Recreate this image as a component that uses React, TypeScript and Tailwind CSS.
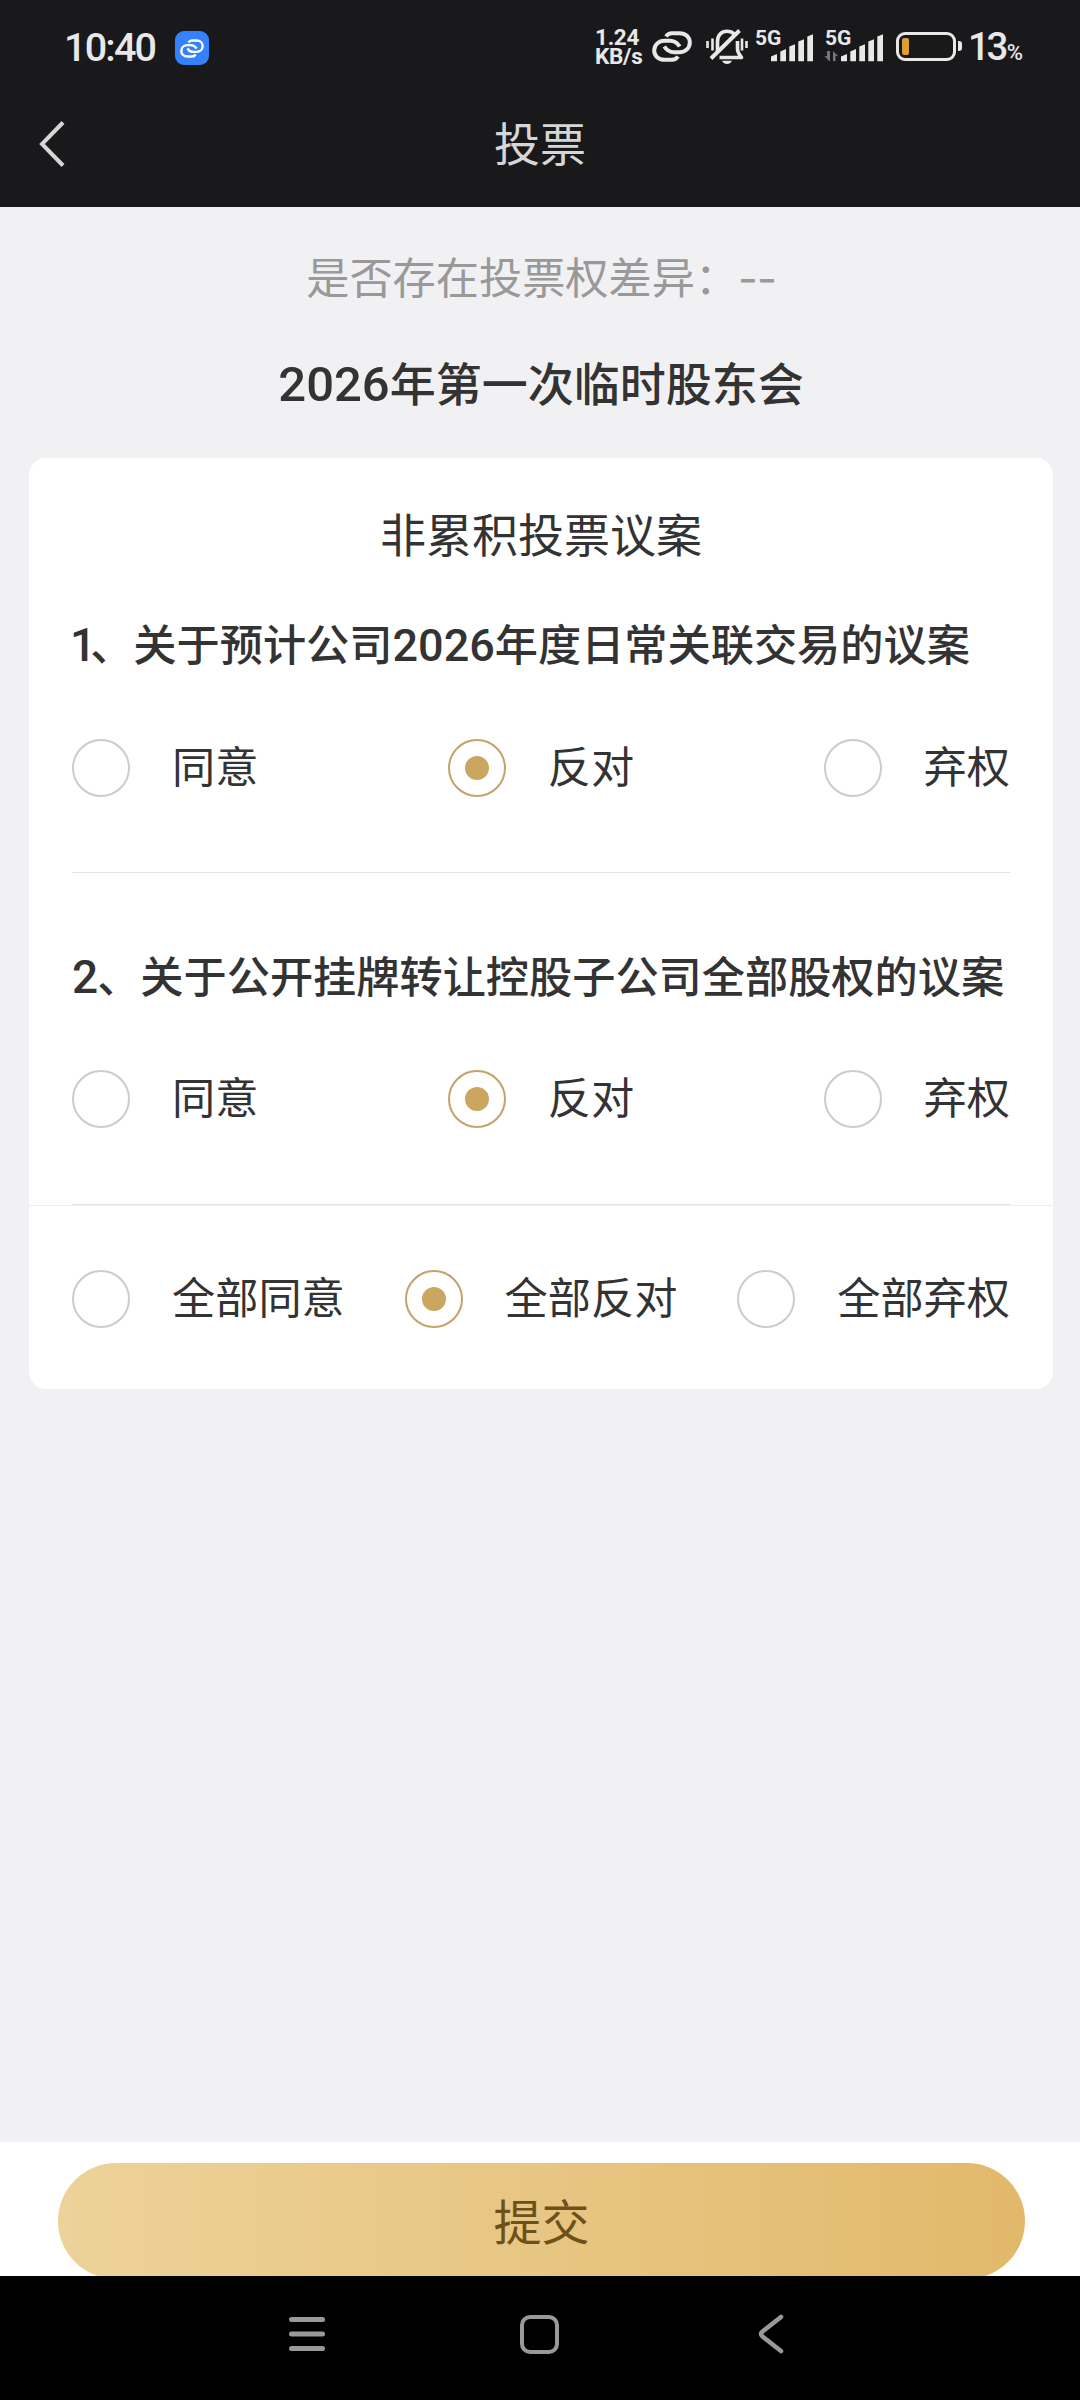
import React, { useState } from 'react';

type Choice = 'agree' | 'against' | 'abstain';

interface Proposal {
  id: number;
  title: React.ReactNode;
}

const choices: { value: Choice; label: string }[] = [
  { value: 'agree', label: '同意' },
  { value: 'against', label: '反对' },
  { value: 'abstain', label: '弃权' },
];

const proposals: Proposal[] = [
  {
    id: 1,
    title: (
      <>
        <span className="-ml-[2px] mr-[-4px] font-[Roboto] text-[46px] leading-none tracking-[-2px]">1</span>、关于预计公司
        <span className="font-[Roboto] text-[45px] leading-none">2026</span>年度日常关联交易的议案
      </>
    ),
  },
  {
    id: 2,
    title: (
      <>
        <span className="mr-[-1px] font-[Roboto] text-[46px] leading-none">2</span>、关于公开挂牌转让控股子公司全部股权的议案
      </>
    ),
  },
];

const LinkIcon: React.FC<{ className?: string; strokeWidth?: number }> = ({ className, strokeWidth = 4 }) => (
  <svg viewBox="0 0 40 31" className={className} fill="none" stroke="currentColor" strokeWidth={strokeWidth}>
    <path d="M14 5.500C15.500 3.200 17 2.200 20 2.200H27.500C33.500 2.200 37.800 6 37.800 11.500C37.800 17 33.500 21.200 27.500 21.200H22C17.500 21.200 14.500 19 12.300 15.500" />
    <path d="M26 25.500C24.500 27.800 23 28.800 20 28.800H12.500C6.500 28.800 2.200 25 2.200 19.500C2.200 14 6.500 9.800 12.500 9.800H18C22.500 9.800 25.500 12 27.700 15.500" />
  </svg>
);

const MutedBellIcon: React.FC = () => (
  <svg viewBox="0 0 42 36" className="h-[36px] w-[42px]" fill="none" stroke="currentColor" strokeWidth="3.600">
    <path d="M11.500 22V12.500C11.500 6 15.500 2.300 21 2.300C23.800 2.300 26.200 3.200 28 5" />
    <path d="M31.500 12V20C31.500 23.500 33.500 25.500 35.500 28.500H13.500" strokeLinejoin="round" />
    <path d="M5 29.500L33.500 1.500" strokeWidth="4" />
    <path d="M1.500 12V19M6.500 9.500V21.500M36 9.500V21.500M40.500 12V19" strokeWidth="2.600" />
    <path d="M16 31.800H26C24.800 34 23.300 35 21 35C18.700 35 17.200 34 16 31.800Z" fill="currentColor" stroke="none" />
  </svg>
);

const SignalIcon: React.FC<{ arrows?: boolean }> = ({ arrows }) => (
  <div className="relative h-[32px] w-[60px]">
    <span className="absolute left-[1px] -top-[1px] font-[Roboto] text-[21px] font-bold leading-[18px]">5G</span>
    <svg viewBox="0 0 60 32" className="h-full w-full" fill="currentColor">
      {arrows && (
        <path d="M5 31L0.500 26H3V21H6V31ZM9 21L14 26H11.500V31H9Z" fill="#77777a" />
      )}
      <path d="M17 26.500L23 24V31.300H17Z" />
      <path d="M26.300 21.500L32 19V31.300H26.300Z" />
      <path d="M35.300 16.500L41 14.300V31.300H35.300Z" />
      <path d="M44.300 11.500L50 9.300V31.300H44.300Z" />
      <path d="M53.300 6.500L59 4.300V31.300H53.300Z" />
    </svg>
  </div>
);

const StatusBar: React.FC = () => (
  <div className="flex h-[92px] items-center justify-between pl-[64px] pr-[57px] font-[Roboto] text-[#e8e8e8]">
    <div className="flex items-center pt-[4px]">
      <span className="w-[111px] text-[39.500px] font-medium leading-none tracking-[-1.800px]">10:40</span>
      <div className="flex size-[34px] items-center justify-center rounded-[9px] bg-[#3582ff] text-white">
        <LinkIcon className="h-[19px] w-[24px]" strokeWidth={4} />
      </div>
    </div>
    <div className="flex items-center">
      <div className="w-[57px] pt-[1px] text-[22.500px] font-bold leading-[18.500px] tracking-[-0.300px]">
        <div>1.24</div>
        <div>KB/s</div>
      </div>
      <LinkIcon className="h-[31px] w-[40px]" strokeWidth={4} />
      <div className="ml-[14px] pt-[2px]">
        <MutedBellIcon />
      </div>
      <div className="ml-[6px]">
        <SignalIcon />
      </div>
      <div className="ml-[10px]">
        <SignalIcon arrows />
      </div>
      <div className="ml-[12px] flex items-center">
        <div className="h-[29px] w-[60px] rounded-[9px] border-[3px] border-current p-[3px]">
          <div className="h-[17px] w-[7px] rounded-[2px] bg-[#de9e35]" />
        </div>
        <div className="ml-[2px] h-[10px] w-[4px] rounded-r-[3px] bg-current" />
      </div>
      <div className="ml-[6px] flex items-baseline pt-[2px] leading-none">
        <span className="text-[38.500px] font-medium tracking-[-3.500px]">13</span>
        <span className="ml-[2px] text-[22px] font-medium">%</span>
      </div>
    </div>
  </div>
);

const Radio: React.FC<{ label: string; checked: boolean; onSelect: () => void }> = ({ label, checked, onSelect }) => (
  <button type="button" role="radio" aria-checked={checked} onClick={onSelect} className="flex items-center gap-[42px]">
    <span
      className={`flex size-[58px] items-center justify-center rounded-full border-2 ${
        checked ? 'border-[#c3a36a]' : 'border-[#cccccc]'
      }`}
    >
      {checked && <span className="size-6 rounded-full bg-[#cba661]" />}
    </span>
    <span className="-mt-[8px] text-[43.200px] leading-[58px]">{label}</span>
  </button>
);

const App: React.FC = () => {
  const [votes, setVotes] = useState<Record<number, Choice>>({ 1: 'against', 2: 'against' });

  const voteAll = (value: Choice) => setVotes({ 1: value, 2: value });

  return (
    <div className="flex h-[2400px] w-[1080px] flex-col overflow-hidden bg-[#f1f1f4] font-['Noto_Sans_CJK_SC',sans-serif] text-[#333333]">
      <header className="h-[207px] shrink-0 bg-[#19191b]">
        <StatusBar />
        <div className="grid h-[103px] grid-cols-[1fr_auto_1fr] items-center text-[#d6d6d6]">
          <svg viewBox="0 0 26 46" className="ml-[39px] h-[46px] w-[26px]" fill="none" stroke="currentColor" strokeWidth="4">
            <path d="M24 1.500L3 23L24 44.500" />
          </svg>
          <h1 className="-mt-[5px] text-[46px] leading-none">投票</h1>
        </div>
      </header>

      <main className="flex-1 pl-[29px] pr-[27px]">
        <p className="h-[98px] pt-[38px] text-center text-[43.200px] leading-[60px] text-[#999999]">
          是否存在投票权差异：<span className="font-[Inter] leading-none tracking-[-1px]">--</span>
        </p>
        <h2 className="mt-[46px] h-[60px] text-center text-[46px] font-medium leading-[60px]">
          <span className="font-[Roboto] text-[49px] leading-none">2026</span>年第一次临时股东会
        </h2>

        <section className="mt-[47px] h-[931px] rounded-[17px] bg-white">
          <h3 className="pt-[44px] text-center text-[46px] leading-[60px]">非累积投票议案</h3>
          {proposals.map((proposal) => (
            <div key={proposal.id} className="mx-[43px] h-[332px] border-b border-[#e2e2e2] first-of-type:h-[311px]">
              <p className={`whitespace-nowrap text-[43.200px] font-medium leading-[60px] ${proposal.id === 1 ? 'pt-[50px]' : 'pt-[71px]'}`}>
                {proposal.title}
              </p>
              <div role="radiogroup" className={`flex justify-between ${proposal.id === 1 ? 'mt-[67px]' : 'mt-[66px]'}`}>
                {choices.map((choice) => (
                  <Radio
                    key={choice.value}
                    label={choice.label}
                    checked={votes[proposal.id] === choice.value}
                    onSelect={() => setVotes({ ...votes, [proposal.id]: choice.value })}
                  />
                ))}
              </div>
            </div>
          ))}
          <div role="radiogroup" className="flex justify-between border-t border-[#eeeeee] px-[43px] pt-[64px]">
            {choices.map((choice) => (
              <Radio
                key={choice.value}
                label={`全部${choice.label}`}
                checked={votes[1] === choice.value && votes[2] === choice.value}
                onSelect={() => voteAll(choice.value)}
              />
            ))}
          </div>
        </section>
      </main>

      <footer className="h-[134px] shrink-0 overflow-hidden bg-white pl-[58px] pr-[55px] pt-[21px]">
        <button
          type="button"
          className="h-[116px] w-full rounded-full bg-linear-to-r from-[#edd299] to-[#e2b96b] pb-[5px] text-[48px] leading-none text-[#6e5118]"
        >
          提交
        </button>
      </footer>

      <nav className="flex h-[124px] shrink-0 items-center justify-center bg-black pb-[8px] pr-[1px] text-[#999999]">
        <svg viewBox="0 0 38 40" className="h-[40px] w-[38px]" stroke="currentColor" strokeWidth="5" strokeLinecap="round">
          <path d="M3.500 5.500H34.500M3.500 20H34.500M3.500 34.500H34.500" />
        </svg>
        <div className="mx-[194px] size-[39px] rounded-[10px] border-[4.500px] border-current" />
        <svg viewBox="0 0 38 40" className="h-[40px] w-[38px]" fill="none" stroke="currentColor" strokeWidth="4.500" strokeLinecap="round">
          <path d="M28 3L9.500 17.500Q6.500 20 9.500 22.500L28 37" />
        </svg>
      </nav>
    </div>
  );
};

export default App;
